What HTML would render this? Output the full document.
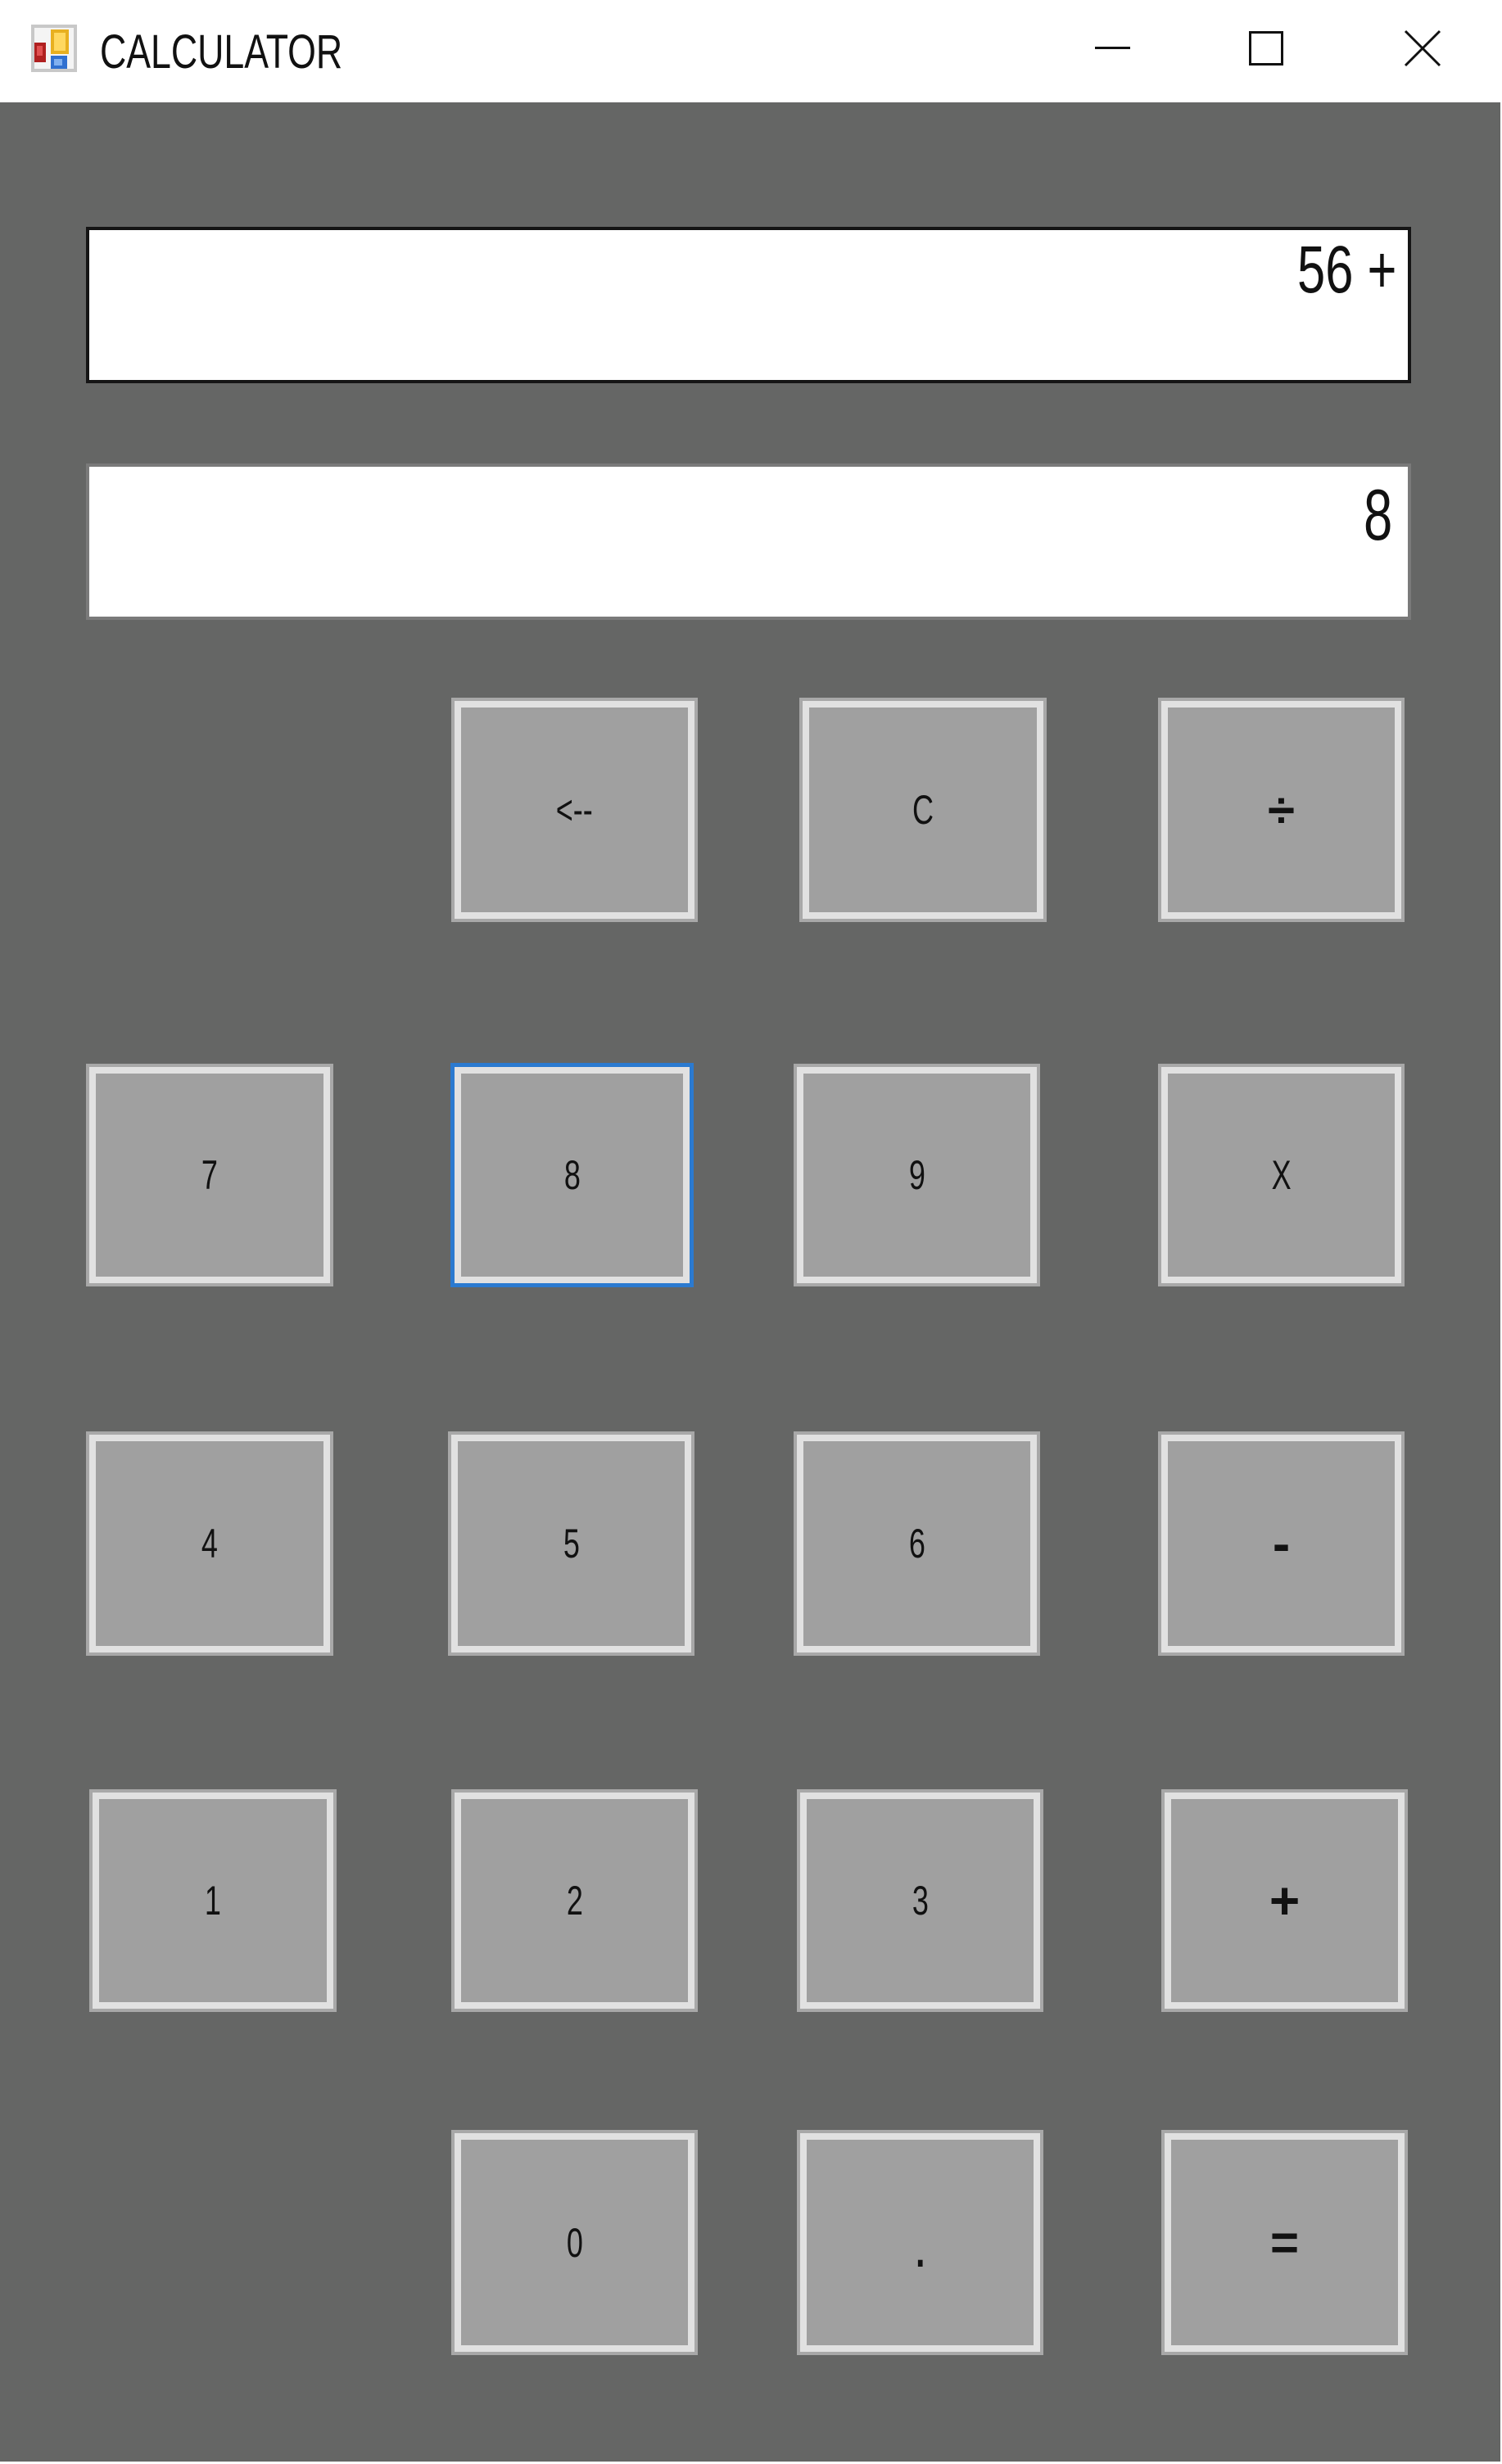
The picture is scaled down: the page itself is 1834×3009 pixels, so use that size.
<!DOCTYPE html>
<html><head><meta charset="utf-8"><style>
*{margin:0;padding:0;box-sizing:border-box}
body{width:1834px;height:3009px;background:#fff;position:relative;overflow:hidden;font-family:"Liberation Sans",sans-serif}
.bar{position:absolute;left:0;top:0;width:1834px;height:125px;background:#fff}
.main{position:absolute;left:0;top:125px;width:1832px;height:2881px;background:#656665}
.t{position:absolute;white-space:nowrap;transform-origin:left top}
.disp{position:absolute;left:105px;width:1618px;height:191px;background:#fff}
.btn{position:absolute;background:#a0a0a0;border:8px solid #e1e1e1;box-shadow:0 0 0 4px #a8a8a8;display:flex;align-items:center;justify-content:center;font-size:50px;color:#111}
.btn span{display:inline-block;transform:scaleX(.72)}
.blue{box-shadow:0 0 0 5px #2b7ad0}
</style></head><body>
<div class="bar">
 <svg style="position:absolute;left:38px;top:30px" width="56" height="58" viewBox="0 0 56 58">
  <rect x="0" y="0" width="56" height="58" fill="#c8c8c8"/>
  <rect x="4" y="4" width="48" height="50" fill="#f4f4f4"/>
  <rect x="24" y="6" width="22" height="30" fill="#e8b020"/><rect x="28" y="10" width="14" height="22" fill="#ffd860"/>
  <rect x="4" y="22" width="14" height="24" fill="#b02020"/><rect x="7" y="26" width="7" height="12" fill="#e05050"/>
  <rect x="24" y="38" width="20" height="16" fill="#3070d0"/><rect x="28" y="42" width="10" height="8" fill="#80b0f0"/>
 </svg>
 <div class="t" style="left:122px;top:30px;font-size:58px;color:#111;transform:scaleX(.77)">CALCULATOR</div>
 <div style="position:absolute;left:1337px;top:57px;width:43px;height:3px;background:#111"></div>
 <div style="position:absolute;left:1525px;top:38px;width:42px;height:42px;border:3px solid #111"></div>
 <svg style="position:absolute;left:1713px;top:35px" width="48" height="48"><path d="M3 3L45 45M45 3L3 45" stroke="#111" stroke-width="3"/></svg>
</div>
<div class="main"></div>
<div class="disp" style="top:277px;border:4px solid #151515"></div>
<div class="t" style="left:1584px;top:283px;font-size:82px;color:#111;transform:scaleX(.75)">56 +</div>
<div class="disp" style="top:566px;border:4px solid #7a7a7a"></div>
<div class="t" style="left:1665px;top:578px;font-size:88px;color:#111;transform:scaleX(.72)">8</div>

<div class="btn" style="left:555px;top:856px;width:293px;height:266px"><span>&lt;--</span></div>
<div class="btn" style="left:980px;top:856px;width:294px;height:266px"><span>C</span></div>
<div class="btn" style="left:1418px;top:856px;width:293px;height:266px"><span style="font-weight:bold;font-size:60px;transform:none">÷</span></div>

<div class="btn" style="left:109px;top:1303px;width:294px;height:264px"><span>7</span></div>
<div class="btn blue" style="left:555px;top:1303px;width:287px;height:264px"><span>8</span></div>
<div class="btn" style="left:973px;top:1303px;width:293px;height:264px"><span>9</span></div>
<div class="btn" style="left:1418px;top:1303px;width:293px;height:264px"><span>X</span></div>

<div class="btn" style="left:109px;top:1752px;width:294px;height:266px"><span>4</span></div>
<div class="btn" style="left:551px;top:1752px;width:293px;height:266px"><span>5</span></div>
<div class="btn" style="left:973px;top:1752px;width:293px;height:266px"><span>6</span></div>
<div class="btn" style="left:1418px;top:1752px;width:293px;height:266px"><span style="font-weight:bold;font-size:64px;transform:none">-</span></div>

<div class="btn" style="left:113px;top:2189px;width:294px;height:264px"><span>1</span></div>
<div class="btn" style="left:555px;top:2189px;width:293px;height:264px"><span>2</span></div>
<div class="btn" style="left:977px;top:2189px;width:293px;height:264px"><span>3</span></div>
<div class="btn" style="left:1422px;top:2189px;width:293px;height:264px"><span style="font-weight:bold;font-size:64px;transform:none">+</span></div>

<div class="btn" style="left:555px;top:2605px;width:293px;height:267px"><span>0</span></div>
<div class="btn" style="left:977px;top:2605px;width:293px;height:267px"><span style="font-weight:bold;font-size:56px;margin-top:20px">.</span></div>
<div class="btn" style="left:1422px;top:2605px;width:293px;height:267px"><span style="font-weight:bold;font-size:60px;transform:none">=</span></div>
</body></html>
